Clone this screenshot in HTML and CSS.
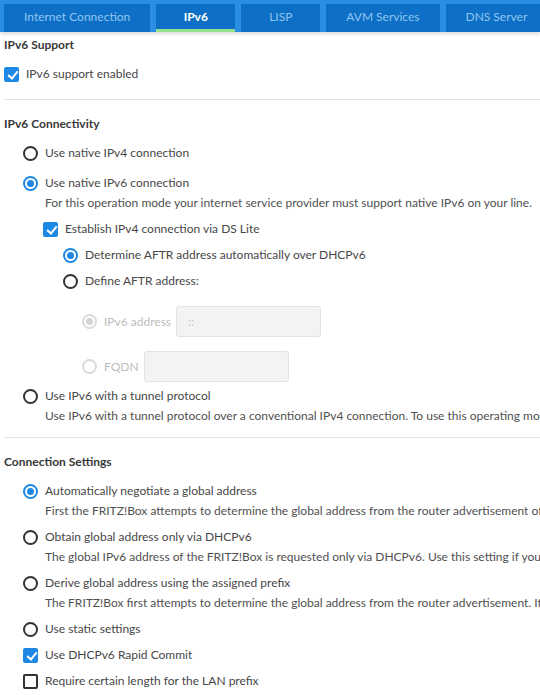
FILE: index.html
```html
<!DOCTYPE html>
<html>
<head>
<meta charset="utf-8">
<link rel="stylesheet" href="styles.css">
</head>
<body>
<div class="tabbar">
  <div class="tab">Internet Connection</div>
  <div class="tab active">IPv6</div>
  <div class="tab">LISP</div>
  <div class="tab">AVM Services</div>
  <div class="tab">DNS Server</div>
</div>
<div class="content">
  <section class="sec first">
    <h2 class="heading">IPv6 Support</h2>
    <div class="opt lvl0"><span class="cb on"></span><span>IPv6 support enabled</span></div>
  </section>
  <hr class="sep">
  <section class="sec">
    <h2 class="heading">IPv6 Connectivity</h2>
    <div class="opt lvl1 gap-lg"><span class="rd"></span><span>Use native IPv4 connection</span></div>
    <div class="opt lvl1 tight"><span class="rd on"></span><span>Use native IPv6 connection</span></div>
    <div class="desc lvl1d">For this operation mode your internet service provider must support native IPv6 on your line.</div>
    <div class="opt lvl2"><span class="cb on"></span><span>Establish IPv4 connection via DS Lite</span></div>
    <div class="opt lvl3"><span class="rd on"></span><span>Determine AFTR address automatically over DHCPv6</span></div>
    <div class="opt lvl3 before-inputs"><span class="rd"></span><span>Define AFTR address:</span></div>
    <div class="opt lvl4 input-row disabled"><span class="rd dis on"></span><span>IPv6 address</span><span class="field">::</span></div>
    <div class="opt lvl4 input-row disabled last-input"><span class="rd dis"></span><span>FQDN</span><span class="field"></span></div>
    <div class="opt lvl1 tight"><span class="rd"></span><span>Use IPv6 with a tunnel protocol</span></div>
    <div class="desc lvl1d">Use IPv6 with a tunnel protocol over a conventional IPv4 connection. To use this operating mode, you need a tunnel provider.</div>
  </section>
  <hr class="sep sep2">
  <section class="sec">
    <h2 class="heading">Connection Settings</h2>
    <div class="opt lvl1 tight"><span class="rd on"></span><span>Automatically negotiate a global address</span></div>
    <div class="desc lvl1d">First the FRITZ!Box attempts to determine the global address from the router advertisement of the internet service provider.</div>
    <div class="opt lvl1 tight"><span class="rd"></span><span>Obtain global address only via DHCPv6</span></div>
    <div class="desc lvl1d">The global IPv6 address of the FRITZ!Box is requested only via DHCPv6. Use this setting if you use a stateful configuration.</div>
    <div class="opt lvl1 tight"><span class="rd"></span><span>Derive global address using the assigned prefix</span></div>
    <div class="desc lvl1d">The FRITZ!Box first attempts to determine the global address from the router advertisement. If this is not possible, it derives it.</div>
    <div class="opt lvl1"><span class="rd"></span><span>Use static settings</span></div>
    <div class="opt lvl1"><span class="cb on"></span><span>Use DHCPv6 Rapid Commit</span></div>
    <div class="opt lvl1"><span class="cb"></span><span>Require certain length for the LAN prefix</span></div>
  </section>
</div>
</body>
</html>
```
FILE: styles.css
```css
html, body {
  margin: 0;
  padding: 0;
  background: #ffffff;
  overflow: hidden;
}
body {
  width: 540px;
  height: 695px;
  font-family: "Lato", "Liberation Sans", sans-serif;
  font-size: 12px;
  color: #474747;
  white-space: nowrap;
}
.tabbar {
  height: 32px;
  background: #2a8fe2;
  display: flex;
  align-items: flex-start;
  gap: 6px;
  padding: 4px 0 0 4px;
  box-sizing: border-box;
  box-shadow: 0 2px 4px rgba(0, 0, 0, 0.15);
  position: relative;
  overflow: hidden;
}
.tab {
  height: 28px;
  box-sizing: border-box;
  background: #0d70c6;
  color: #90c5f0;
  padding: 0 20px 3px 20px;
  min-width: 79px;
  display: flex;
  align-items: center;
  justify-content: center;
  font-size: 12px;
  flex-shrink: 0;
}
.tab.active {
  color: #ffffff;
  font-weight: 700;
  border-bottom: 3px solid #92e08c;
  padding-bottom: 0;
}
.content {
  padding: 3px 0 0 4px;
}
.sec {
  display: flex;
  flex-direction: column;
}
.heading {
  margin: 0 0 9px 0;
  font-size: 12px;
  font-weight: 700;
  color: #383838;
  line-height: 20px;
}
.sep {
  border: 0;
  border-top: 1px solid #e2e2e2;
  margin: 9px 0 14px 0;
  height: 0;
}
.sep2 {
  margin-top: 5px;
}
.opt {
  display: flex;
  align-items: center;
  gap: 7px;
  height: 20px;
  line-height: 20px;
  margin-bottom: 6px;
  font-size: 12px;
}
.opt.gap-lg { margin-bottom: 10px; }
.opt.tight { margin-bottom: 0; }
.desc {
  line-height: 20px;
  margin-bottom: 6px;
  color: #505050;
}
.lvl0 { margin-left: 0; }
.lvl1 { margin-left: 19px; }
.lvl1d { margin-left: 41px; }
.lvl2 { margin-left: 39px; }
.lvl3 { margin-left: 59px; }
.lvl4 { margin-left: 78px; }
.before-inputs { margin-bottom: 15px; }
.input-row { height: 31px; margin-bottom: 14px; }
.input-row.last-input { margin-bottom: 4px; }
.disabled { color: #bdbdbd; }
.field {
  width: 145px;
  height: 31px;
  box-sizing: border-box;
  background: #f3f3f3;
  border: 1px solid #e2e2e2;
  border-radius: 3px;
  margin-left: -2px;
  padding-left: 11px;
  color: #c4c4c4;
  font-size: 12px;
  line-height: 29px;
}
.cb {
  width: 15px;
  height: 15px;
  box-sizing: border-box;
  border: 2px solid #333;
  border-radius: 2px;
  flex-shrink: 0;
  position: relative;
}
.cb.on {
  background: #1e88e5;
  border-color: #1e88e5;
}
.cb.on::after {
  content: "";
  position: absolute;
  left: 3.5px;
  top: 0px;
  width: 4px;
  height: 8px;
  border-right: 2px solid #fff;
  border-bottom: 2px solid #fff;
  transform: rotate(40deg);
}
.rd {
  width: 15px;
  height: 15px;
  box-sizing: border-box;
  border: 2px solid #333;
  border-radius: 50%;
  flex-shrink: 0;
  position: relative;
}
.rd.on {
  border-color: #1e88e5;
}
.rd.on::after {
  content: "";
  position: absolute;
  left: 2px;
  top: 2px;
  width: 7px;
  height: 7px;
  border-radius: 50%;
  background: #1e88e5;
}
.rd.dis {
  border-color: #dadada;
}
.rd.dis.on::after {
  background: #d4d4d4;
}
```
